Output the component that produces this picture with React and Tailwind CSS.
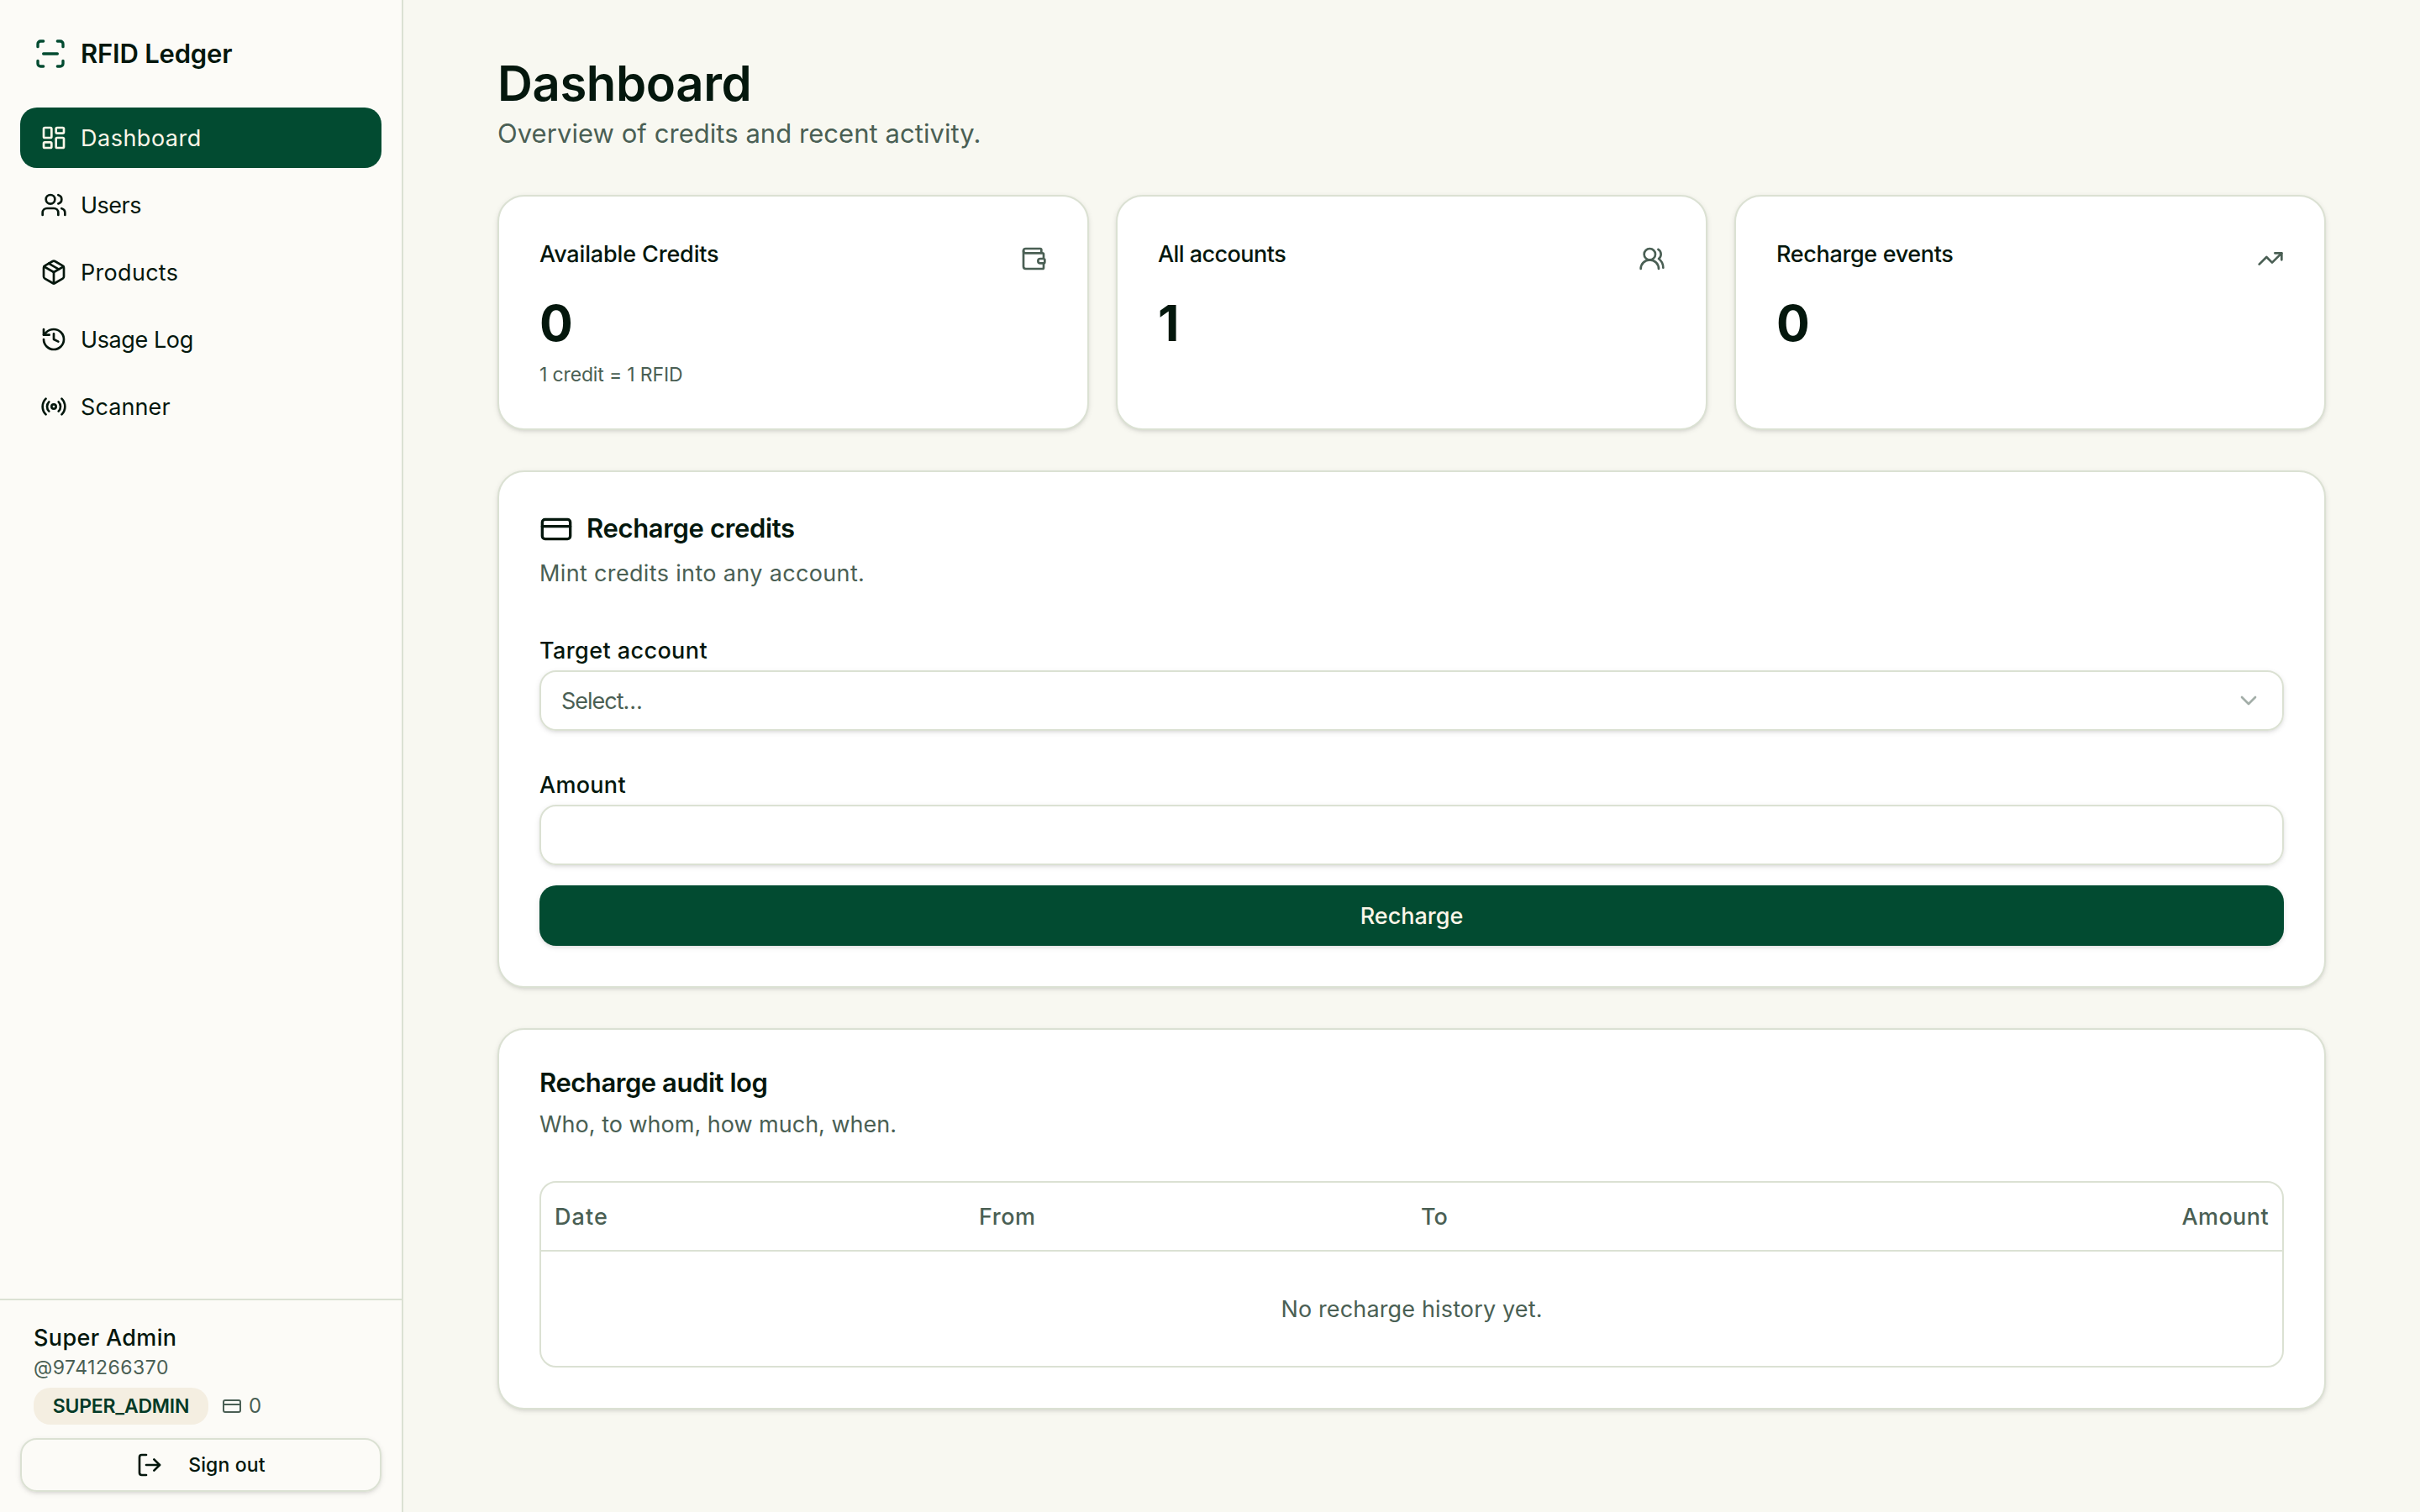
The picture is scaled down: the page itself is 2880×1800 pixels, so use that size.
import {
  ChevronDown,
  CreditCard,
  History,
  LayoutDashboard,
  LogOut,
  Package,
  Radio,
  ScanLine,
  TrendingUp,
  Users,
  UsersRound,
  Wallet,
} from "lucide-react";

const navItems = [
  { label: "Dashboard", icon: LayoutDashboard, active: true, tracking: "tracking-[0.5px]" },
  { label: "Users", icon: Users, tracking: "tracking-[-0.5px]" },
  { label: "Products", icon: Package, tracking: "tracking-[0.3px]" },
  { label: "Usage Log", icon: History, tracking: "tracking-[-0.4px]" },
  { label: "Scanner", icon: Radio, tracking: "tracking-[0.1px]" },
];

const stats = [
  {
    label: "Available Credits",
    value: 0,
    hint: "1 credit = 1 RFID",
    icon: Wallet,
    tracking: "tracking-[-0.15px]",
  },
  { label: "All accounts", value: 1, icon: UsersRound, tracking: "tracking-[-0.55px]" },
  { label: "Recharge events", value: 0, icon: TrendingUp, tracking: "tracking-[-0.35px]" },
];

const shadow = "shadow-[0_2px_6px_rgba(0,0,0,0.1),0_2px_4px_-2px_rgba(0,0,0,0.1)]";

function Sidebar() {
  return (
    <aside className="flex w-[480px] shrink-0 flex-col border-r-2 border-[#dbe1d3] bg-[#fcfbf7]">
      <div className="flex h-32 items-center gap-4 px-10">
        <ScanLine className="size-10 text-[#024b31]" />
        <span className="text-[31px] font-semibold tracking-[-0.2px]">RFID Ledger</span>
      </div>
      <nav className="flex flex-1 flex-col gap-2 px-6">
        {navItems.map(({ label, icon: Icon, active, tracking }) => (
          <a
            key={label}
            className={
              active
                ? "flex h-18 items-center gap-4 rounded-[20px] bg-[#024b31] px-6 text-[27px] text-[#fcf6e8]"
                : "flex h-18 items-center gap-4 rounded-[20px] px-6 text-[27px]"
            }
          >
            <Icon className="size-8" />
            <span className={`pt-0.5 ${tracking}`}>{label}</span>
          </a>
        ))}
      </nav>
      <div className="border-t-2 border-[#dbe1d3] p-6">
        <div className="px-4">
          <p className="-mb-0.5 text-[27px] leading-[42px] font-medium tracking-[0.35px]">
            Super Admin
          </p>
          <p className="text-[23px] leading-8 tracking-[0.5px] text-[#4a5f54]">@9741266370</p>
          <div className="mt-2 flex items-center gap-4">
            <span className="flex h-11 w-52 items-center justify-center rounded-[20px] bg-[#f4eee1] text-[23px] font-semibold tracking-[-0.2px] text-[#023a27]">
              SUPER_ADMIN
            </span>
            <span className="flex items-center gap-2 text-[24px] text-[#4a5f54]">
              <CreditCard className="size-6" />0
            </span>
          </div>
        </div>
        <button
          className={`mt-4 flex h-16 w-full items-center justify-center gap-[30px] rounded-[20px] border-2 border-[#dbe1d3] text-[23px] font-medium tracking-[0.15px] ${shadow}`}
        >
          <LogOut className="size-8" />
          Sign out
        </button>
      </div>
    </aside>
  );
}

function Card({ className = "", children }) {
  return (
    <section
      className={`rounded-[32px] border-2 border-[#dbe1d3] bg-white p-12 ${shadow} ${className}`}
    >
      {children}
    </section>
  );
}

function StatCard({ label, value, hint, icon: Icon, tracking }) {
  return (
    <Card className="h-[280px]">
      <div className="flex h-13 justify-between">
        <h3 className={`text-[27px] leading-[42px] font-medium ${tracking}`}>{label}</h3>
        <Icon className="size-8 self-center text-[#4a5f54]" />
      </div>
      <p className="mt-4 h-18 text-[59px] leading-[70px] font-bold">{value}</p>
      {hint && (
        <p className="mt-2 text-[23px] leading-8 tracking-[-0.15px] text-[#4a5f54]">{hint}</p>
      )}
    </Card>
  );
}

function RechargeForm() {
  return (
    <Card className="mt-12">
      <h2 className="flex h-10 items-center gap-4 text-[31px] leading-10 font-semibold tracking-[-0.35px]">
        <CreditCard className="size-10" />
        <span className="pb-0.5">Recharge credits</span>
      </h2>
      <p className="mt-3 h-10 text-[27px] leading-[42px] tracking-[0.35px] text-[#4a5f54]">
        Mint credits into any account.
      </p>
      <label className="mt-13 block h-10 text-[27px] leading-[42px] font-medium tracking-[0.4px]">
        Target account
      </label>
      <div
        className={`mt-1 flex h-18 items-center justify-between rounded-[20px] border-2 border-[#dbe1d3] px-6 text-[27px] text-[#4a5f54] ${shadow}`}
      >
        <span className="pt-0.5 tracking-[-1px]">Select…</span>
        <ChevronDown className="size-8 opacity-50" />
      </div>
      <label className="mt-11 block h-10 text-[27px] leading-[42px] font-medium tracking-[0.3px]">
        Amount
      </label>
      <input
        className={`mt-1 block h-18 w-full rounded-[20px] border-2 border-[#dbe1d3] px-6 text-[27px] ${shadow}`}
      />
      <button
        className={`mt-6 h-18 w-full rounded-[20px] bg-[#024b31] pt-0.5 text-[27px] font-medium text-[#fcf6e8] ${shadow}`}
      >
        Recharge
      </button>
    </Card>
  );
}

function AuditLog() {
  return (
    <Card className="mt-12">
      <h2 className="h-8 text-[31px] leading-[30px] font-semibold tracking-[-0.45px]">
        Recharge audit log
      </h2>
      <p className="mt-3 h-10 text-[27px] leading-[42px] text-[#4a5f54]">
        Who, to whom, how much, when.
      </p>
      <div className="mt-12 rounded-[20px] border-2 border-[#dbe1d3] text-[27px] text-[#4a5f54]">
        <div className="grid h-[82px] grid-cols-[505px_526px_1fr_auto] items-center border-b-2 border-[#dbe1d3] pt-0.5 font-medium">
          <span className="px-4 tracking-[1.1px]">Date</span>
          <span className="px-4 tracking-[0.5px]">From</span>
          <span className="px-4">To</span>
          <span className="px-4 tracking-[0.4px]">Amount</span>
        </div>
        <div className="flex h-34 items-center justify-center pt-0.5 tracking-[0.15px]">
          No recharge history yet.
        </div>
      </div>
    </Card>
  );
}

export default function App() {
  return (
    <div className="flex h-[1800px] w-[2880px] overflow-hidden bg-[#f8f8f1] font-['Inter',sans-serif] text-[#04170d]">
      <Sidebar />
      <main className="flex-1 px-28 pt-16">
        <h1 className="h-18 text-[58px] leading-[70px] font-semibold tracking-[-0.4px]">
          Dashboard
        </h1>
        <p className="h-12 text-[31px] leading-[46px] tracking-[0.05px] text-[#4a5f54]">
          Overview of credits and recent activity.
        </p>
        <div className="mt-12 grid grid-cols-3 gap-8">
          {stats.map((stat) => (
            <StatCard key={stat.label} {...stat} />
          ))}
        </div>
        <RechargeForm />
        <AuditLog />
      </main>
    </div>
  );
}
